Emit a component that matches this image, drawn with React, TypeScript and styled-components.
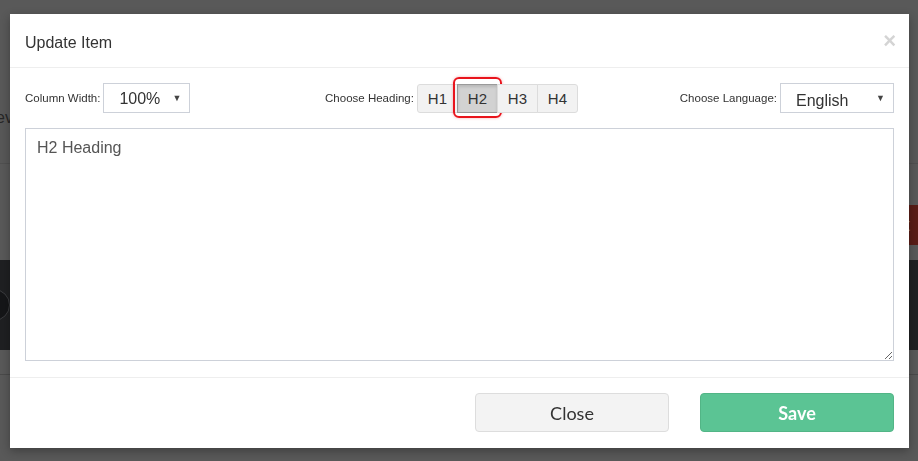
import React from "react";
import styled, { createGlobalStyle } from "styled-components";

const Global = createGlobalStyle`
  html, body { margin: 0; padding: 0; }
  body { background: #595959; font-family: "Liberation Sans", Arial, sans-serif; overflow: hidden; }
  * { box-sizing: border-box; }
`;

const Page = styled.div`
  width: 918px;
  height: 461px;
  display: flex;
  flex-direction: column;
  background: #595959;
  overflow: hidden;
`;

const Band = styled.div<{ $h: number; $bg?: string; $line?: string; $top?: boolean }>`
  height: ${(p) => p.$h}px;
  flex: none;
  background: ${(p) => p.$bg || "#595959"};
  border-bottom: ${(p) => (p.$line ? `1px solid ${p.$line}` : "none")};
  display: flex;
  align-items: ${(p) => (p.$top ? "flex-start" : "center")};
  justify-content: space-between;
`;

const CutText = styled.span`
  font-size: 16px;
  color: #262626;
  margin-left: -4px;
  margin-top: 9px;
  line-height: 18px;
`;

const RedBtn = styled.div`
  width: 14px;
  height: 100%;
  margin-left: auto;
  background: #5a1d17;
  color: #8c6a66;
  font-size: 18px;
  display: flex;
  align-items: center;
  padding-left: 1px;
  overflow: hidden;
`;

const Circle = styled.div`
  width: 32px;
  height: 32px;
  border-radius: 50%;
  border: 1px solid #3c3d40;
  background: #151618;
  margin-left: -22px;
`;

const Modal = styled.div`
  position: fixed;
  top: 14px;
  left: 10px;
  width: 899px;
  height: 434px;
  background: #fff;
  box-shadow: 0 3px 9px rgba(0, 0, 0, 0.3);
  display: flex;
  flex-direction: column;
`;

const Header = styled.div`
  height: 54px;
  padding: 0 15px;
  border-bottom: 1px solid #eeeeee;
  display: flex;
  align-items: center;
  justify-content: space-between;
`;

const Title = styled.h4`
  margin: 0;
  font-size: 16px;
  font-weight: normal;
  color: #333;
  padding-top: 4px;
`;

const CloseX = styled.span`
  font-size: 22px;
  font-weight: bold;
  color: #d4d4d4;
  line-height: 1;
  margin-top: 0px;
  margin-right: -2px;
`;

const Toolbar = styled.div`
  display: grid;
  grid-template-columns: 1fr auto 1fr;
  align-items: center;
  padding: 15px 15px 16px;
  height: 60px;
`;

const Group = styled.div<{ $justify: string; $shift?: number }>`
  display: flex;
  align-items: center;
  justify-content: ${(p) => p.$justify};
  margin-right: ${(p) => p.$shift || 0}px;
`;

const Label = styled.span`
  font-size: 11.5px;
  color: #333;
  margin-right: 3px;
  white-space: nowrap;
`;

const Select = styled.div<{ $w: number; $pad: number; $dy: number }>`
  width: ${(p) => p.$w}px;
  height: 30px;
  border: 1px solid #cdd1d9;
  background: #fff;
  display: flex;
  align-items: center;
  justify-content: space-between;
  padding: 0 8px 0 ${(p) => p.$pad}px;
  font-size: 16px;
  color: #333;
  span:first-child { margin-top: ${(p) => p.$dy}px; }
`;

const Arrow = styled.span`
  font-size: 9px;
  color: #444;
  margin-top: -1px;
`;

const BtnGroup = styled.div`
  display: flex;
`;

const HBtn = styled.div<{ $active?: boolean }>`
  position: relative;
  width: 41px;
  height: 29px;
  display: flex;
  align-items: center;
  justify-content: center;
  font-size: 15px;
  color: #333;
  background: ${(p) => (p.$active ? "#d2d2d2" : "#f2f2f2")};
  border: 1px solid ${(p) => (p.$active ? "#9a9a9a" : "#dcdcdc")};
  box-shadow: ${(p) => (p.$active ? "inset 0 2px 3px rgba(0,0,0,0.12)" : "none")};
  margin-left: -1px;
  &:first-child { border-radius: 3px 0 0 3px; margin-left: 0; }
  &:last-child { border-radius: 0 3px 3px 0; }
`;

const Highlight = styled.div`
  position: absolute;
  top: -8px;
  bottom: -6px;
  left: -5px;
  right: -5px;
  border: 2px solid #e8141c;
  border-radius: 6px;
  box-shadow: 0 0 3px rgba(232, 20, 28, 0.35);
  pointer-events: none;
`;

const Body = styled.div`
  padding: 0 15px 16px;
  border-bottom: 1px solid #eeeeee;
`;

const TextArea = styled.textarea`
  display: block;
  width: 100%;
  height: 233px;
  border: 1px solid #cdd1d9;
  padding: 10px 11px;
  font-family: "Liberation Sans", Arial, sans-serif;
  font-size: 16px;
  color: #555;
  resize: vertical;
  outline: none;
  margin: 0;
`;

const Footer = styled.div`
  display: flex;
  justify-content: flex-end;
  gap: 31px;
  padding: 15px 15px 16px;
`;

const FBtn = styled.div<{ $primary?: boolean }>`
  width: 194px;
  height: 39px;
  border-radius: 4px;
  display: flex;
  align-items: center;
  justify-content: center;
  font-family: Lato, "Liberation Sans", sans-serif;
  font-size: 18px;
  font-weight: ${(p) => (p.$primary ? 700 : 400)};
  color: ${(p) => (p.$primary ? "#fff" : "#333")};
  background: ${(p) => (p.$primary ? "#5bc494" : "#f3f3f3")};
  border: 1px solid ${(p) => (p.$primary ? "#52b586" : "#dddddd")};
`;

export default function App() {
  return (
    <>
      <Global />
      <Page>
        <Band $h={100} />
        <Band $h={64} $bg="#585858" $line="#505050" $top>
          <CutText>ev</CutText>
        </Band>
        <Band $h={41} />
        <Band $h={40}>
          <RedBtn>t</RedBtn>
        </Band>
        <Band $h={15} />
        <Band $h={90} $bg="#1f2022">
          <Circle />
        </Band>
        <Band $h={25} $line="#4a4a4a" />
        <Band $h={86} />
      </Page>
      <Modal>
        <Header>
          <Title>Update Item</Title>
          <CloseX>×</CloseX>
        </Header>
        <Toolbar>
          <Group $justify="flex-start">
            <Label>Column Width:</Label>
            <Select $w={87} $pad={15} $dy={2}>
              <span>100%</span>
              <Arrow>▼</Arrow>
            </Select>
          </Group>
          <Group $justify="center" $shift={16}>
            <Label>Choose Heading:</Label>
            <BtnGroup>
              <HBtn>H1</HBtn>
              <HBtn $active>
                H2
                <Highlight />
              </HBtn>
              <HBtn>H3</HBtn>
              <HBtn>H4</HBtn>
            </BtnGroup>
          </Group>
          <Group $justify="flex-end">
            <Label>Choose Language:</Label>
            <Select $w={114} $pad={15} $dy={5}>
              <span>English</span>
              <Arrow>▼</Arrow>
            </Select>
          </Group>
        </Toolbar>
        <Body>
          <TextArea readOnly value="H2 Heading" />
        </Body>
        <Footer>
          <FBtn>Close</FBtn>
          <FBtn $primary>Save</FBtn>
        </Footer>
      </Modal>
    </>
  );
}
